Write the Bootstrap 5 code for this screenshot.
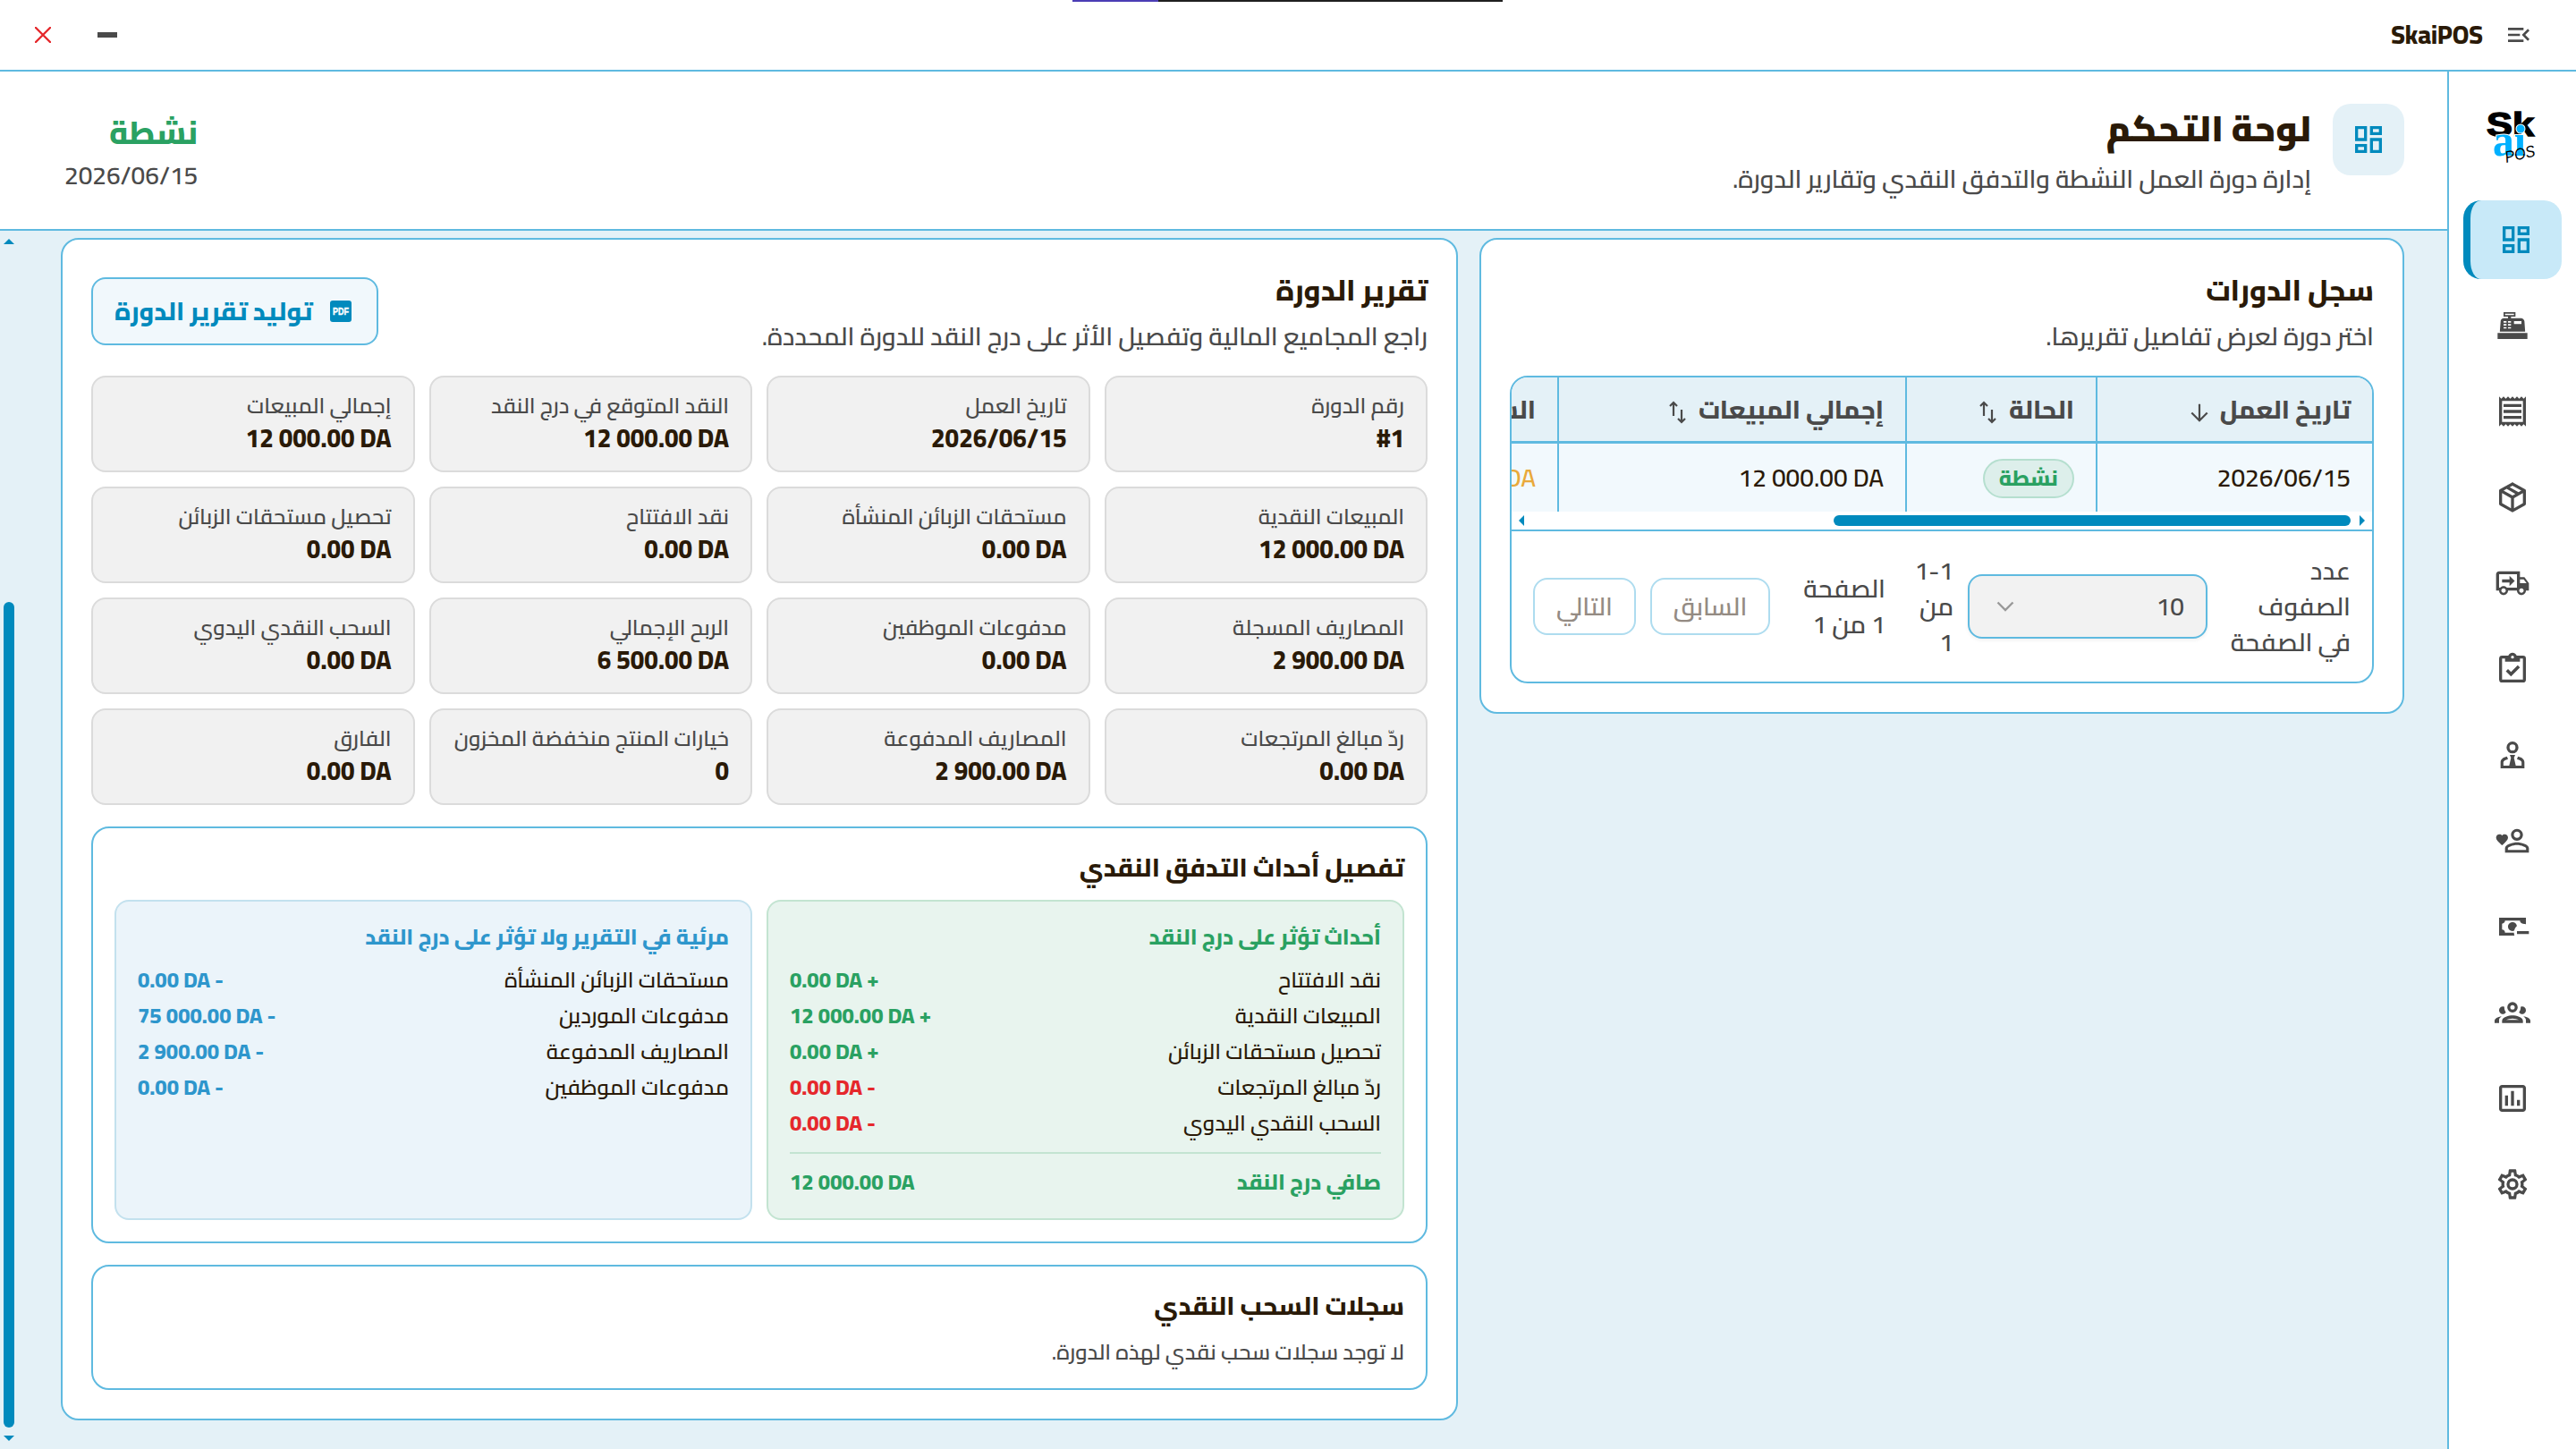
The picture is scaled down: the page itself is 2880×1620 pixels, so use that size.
<!DOCTYPE html>
<html lang="ar" dir="rtl">
<head>
  <meta charset="UTF-8" />
  <meta name="viewport" content="width=device-width, initial-scale=1" />
  <title>لوحة التحكم - SkaiPOS</title>
  <link rel="stylesheet" href="https://cdn.jsdelivr.net/npm/bootstrap@5.3.0/dist/css/bootstrap.min.css" />
  <style>
    :root {
      --line: #5fbae0;
      --brand: #008abd;
      --soft: #e4f1f7;
      --ink: #2a1a08;
      --muted: #4a4a4a;
      --good: #2aa162;
      --bad: #e5282c;
      --info: #2e96cc;
    }
    body {
      height: 1620px;
      overflow: hidden;
      font: 600 28px/40px Cairo, "Noto Sans Arabic", "Open Sans", sans-serif;
      color: var(--ink);
      background: #fff;
    }
    h1, h2, h3, h4, p { margin: 0; }
    .fw-x { font-weight: 800; }
    .muted { color: var(--muted); }
    .good { color: var(--good); }
    .bad { color: var(--bad); }
    .info { color: var(--info); }
    svg { display: block; fill: currentColor; flex: none; }

    /* window bar */
    .topbar { height: 80px; border-bottom: 2px solid var(--line); padding: 0 48px 0 39px; }
    .drag-line { position: absolute; top: 0; left: 1199px; width: 481px; height: 2px; background: linear-gradient(to right, #4b3db5 96px, #1f1f1f 96px); }
    .win-btns { gap: 52px; }

    /* sidebar */
    .sidebar { width: 144px; border-left: 2px solid var(--line); padding: 42px 16px 0; gap: 8px; }
    .brand-logo { height: 64px; margin: 0 auto 30px; direction: ltr; }
    .side-item { height: 88px; color: var(--muted); border-radius: 20px; }
    .side-item.active { background: #c8e9f8; color: var(--brand); border-left: 8px solid var(--brand); }

    /* page header */
    .page-head { height: 178px; border-bottom: 2px solid var(--line); padding: 36px 48px 36px 72px; }
    .head-icon { width: 80px; height: 80px; border-radius: 20px; background: var(--soft); color: var(--brand); }
    .page-head h1 { font-size: 40px; line-height: 56px; font-weight: 900; margin-bottom: 8px; }
    .state { font-size: 36px; line-height: 56px; }

    /* scroll area */
    .scroll-area { background: var(--soft); }
    .cols { display: grid; grid-template-columns: 1034px 1562px; gap: 24px; padding: 8px 48px 0; align-items: start; }
    .vbar { width: 20px; padding: 9px 4px; }
    .vbar .thumb { width: 12px; height: 923px; border-radius: 6px; background: var(--brand); margin: auto 0 9px; }
    .panel { background: #fff; border: 2px solid var(--line); border-radius: 20px; padding: 32px; }
    .panel-in { padding: 24px; }
    .title { font-size: 32px; line-height: 48px; font-weight: 800; margin-bottom: 8px; }
    .subtitle { font-size: 28px; line-height: 40px; font-weight: 800; margin-bottom: 16px; }

    /* sessions table */
    .tbl-box { border: 2px solid var(--line); border-radius: 20px; overflow: hidden; }
    .tbl-scroll { overflow: hidden; }
    .tbl { width: 1300px; table-layout: fixed; border-collapse: separate; border-spacing: 0; }
    .tbl th, .tbl td { padding: 0 24px; border-left: 2px solid var(--line); white-space: nowrap; vertical-align: middle; }
    .tbl th { height: 74px; background: var(--soft); color: var(--muted); font-weight: 800; border-bottom: 3px solid var(--line); }
    .tbl td { height: 76px; background: #f2f9fd; }
    .tbl th svg { display: inline-block; vertical-align: middle; fill: none; stroke: currentColor; margin-right: 6px; }
    .pill { display: inline-block; border: 2px solid #b5dfcf; background: #ddefeb; border-radius: 22px; padding: 4px 16px; font-size: 24px; line-height: 32px; font-weight: 800; color: var(--good); vertical-align: middle; }
    .hbar { height: 20px; padding: 4px 8px; color: var(--brand); }
    .hbar .thumb { width: 578px; height: 12px; border-radius: 6px; background: var(--brand); margin-right: 10px; }
    .tbl-foot { border-top: 2px solid var(--line); padding: 24px; }
    .tbl-foot .lbl { width: 160px; }
    .size-select { width: 268px; height: 72px; background: #f2f2f2; border: 2px solid var(--line); border-radius: 16px; padding: 0 30px 0 24px; padding: 0 24px 0 30px; box-shadow: 0 2px 4px rgba(0, 0, 0, .06); }
    .pg-count { width: 76px; padding-right: 16px; }
    .pg-info { width: 129px; margin-right: 16px; }
    .pg-btn { height: 64px; border: 2px solid #aedcef; border-radius: 16px; color: #948b83; background: #fff; }

    /* report */
    .pdf-btn { height: 76px; border: 2px solid var(--line); border-radius: 16px; background: #f1f8fc; color: var(--brand); padding: 0 24px; gap: 16px; font-weight: 800; }
    .stats { display: grid; grid-template-columns: repeat(4, 1fr); gap: 16px; margin: 24px 0; }
    .stat { height: 108px; border: 2px solid #dbdbdb; border-radius: 16px; background: #f1f1f1; padding: 16px 24px; }
    .stat p { font-size: 24px; line-height: 32px; color: var(--muted); white-space: nowrap; }
    .stat bdi { display: block; font-weight: 800; text-align: right; }
    .events { display: grid; grid-template-columns: 1fr 1fr; gap: 16px; }
    .event-box { border: 2px solid; border-radius: 16px; padding: 24px; font-size: 24px; line-height: 32px; }
    .event-box h4 { font-size: 24px; line-height: 32px; font-weight: 800; margin-bottom: 16px; }
    .event-box .line { display: flex; justify-content: space-between; margin-bottom: 8px; }
    .event-box .line span:last-child, .total { font-weight: 800; }
    .box-in { background: #e8f4ee; border-color: #c3e4d1; }
    .box-out { background: #ebf4fa; border-color: #c3e1ee; }
    .total { border-top: 2px solid #c3e4d1; margin-top: 16px; padding-top: 16px; }
  </style>
</head>
<body class="d-flex flex-column">

  <header class="topbar d-flex justify-content-between align-items-center flex-shrink-0">
    <div class="drag-line"></div>
    <div class="d-flex align-items-center gap-4">
      <svg class="muted" width="32" height="32" viewBox="0 0 24 24"><path d="M3 18h13v-2H3v2zM3 6v2h13V6H3zm0 7h10v-2H3v2zm18 2.59L17.42 12 21 8.41 19.59 7l-5 5 5 5L21 15.59z"/></svg>
      <span class="fw-x">SkaiPOS</span>
    </div>
    <div class="win-btns d-flex align-items-center">
      <svg class="muted" width="22" height="6" viewBox="0 0 22 6"><path d="M0 0h22v6H0z"/></svg>
      <svg class="bad" width="18" height="18" viewBox="0 0 18 18"><path d="M1 1l16 16M17 1L1 17" fill="none" stroke="currentColor" stroke-width="2.4" stroke-linecap="round"/></svg>
    </div>
  </header>

  <div class="d-flex flex-grow-1">
    <nav class="sidebar d-flex flex-column flex-shrink-0">
      <svg class="brand-logo" width="64" height="64" viewBox="0 0 64 64">
        <text x="3" y="30" font-family="Liberation Sans" font-weight="700" font-size="36" fill="#000" stroke="#000" stroke-width="1.5" textLength="53" lengthAdjust="spacingAndGlyphs">Sk</text>
        <g font-family="Liberation Serif" font-weight="700" font-size="50" fill="#00b0ff" stroke="#fff" stroke-width="2" paint-order="stroke">
          <text x="10" y="52" textLength="37" lengthAdjust="spacingAndGlyphs">aı</text>
          <circle cx="41" cy="22" r="4.5"/>
        </g>
        <text x="25" y="60" font-family="Liberation Sans" font-weight="400" font-style="italic" font-size="18" fill="#000" transform="rotate(-13 25 60)" textLength="34" lengthAdjust="spacingAndGlyphs">POS</text>
      </svg>
      <a class="side-item active d-flex align-items-center justify-content-center"><svg width="40" height="40" viewBox="0 0 24 24"><path d="M19 5v2h-4V5h4M9 5v6H5V5h4m10 8v6h-4v-6h4M9 17v2H5v-2h4M21 3h-8v6h8V3zM11 3H3v10h8V3zm10 8h-8v10h8V11zm-10 4H3v6h8v-6z"/></svg></a>
      <a class="side-item d-flex align-items-center justify-content-center"><svg width="40" height="40" viewBox="0 0 24 24"><path d="M2 17H22V21H2V17M6.25 7H9V6H6V3H14V6H11V7H17.8C18.8 7 19.8 8 20 9L20.5 16H3.5L4.05 9C4.05 8 5.05 7 6.25 7M13 9V11H18V9H13M6 9V10H8V9H6M9 9V10H11V9H9M6 11V12H8V11H6M9 11V12H11V11H9M6 13V14H8V13H6M9 13V14H11V13H9M7 4V5H13V4H7Z"/></svg></a>
      <a class="side-item d-flex align-items-center justify-content-center"><svg width="40" height="40" viewBox="0 0 24 24"><path d="M19.5 3.5L18 2l-1.5 1.5L15 2l-1.5 1.5L12 2l-1.5 1.5L9 2 7.5 3.5 6 2 4.5 3.5 3 2v20l1.5-1.5L6 22l1.5-1.5L9 22l1.5-1.5L12 22l1.5-1.5L15 22l1.5-1.5L18 22l1.5-1.5L21 22V2l-1.5 1.5zM19 19.09H5V4.91h14v14.18zM6 15h12v2H6zm0-4h12v2H6zm0-4h12v2H6z"/></svg></a>
      <a class="side-item d-flex align-items-center justify-content-center"><svg width="40" height="40" viewBox="0 0 24 24"><path d="M21,16.5C21,16.88 20.79,17.21 20.47,17.38L12.57,21.82C12.41,21.94 12.21,22 12,22C11.79,22 11.59,21.94 11.43,21.82L3.53,17.38C3.21,17.21 3,16.88 3,16.5V7.5C3,7.12 3.21,6.79 3.53,6.62L11.43,2.18C11.59,2.06 11.79,2 12,2C12.21,2 12.41,2.06 12.57,2.18L20.47,6.62C20.79,6.79 21,7.12 21,7.5V16.5M12,4.15L10.11,5.22L16,8.61L17.96,7.5L12,4.15M6.04,7.5L12,10.85L13.96,9.75L8.08,6.35L6.04,7.5M5,15.91L11,19.29V12.58L5,9.21V15.91M19,15.91V9.21L13,12.58V19.29L19,15.91Z"/></svg></a>
      <a class="side-item d-flex align-items-center justify-content-center"><svg width="40" height="40" viewBox="0 0 24 24"><path d="M18 18.5c.83 0 1.5-.67 1.5-1.5s-.67-1.5-1.5-1.5-1.5.67-1.5 1.5.67 1.5 1.5 1.5m1.5-9H17V12h4.46L19.5 9.5M6 18.5c.83 0 1.5-.67 1.5-1.5s-.67-1.5-1.5-1.5-1.5.67-1.5 1.5.67 1.5 1.5 1.5M20 8l3 4v5h-2c0 1.66-1.34 3-3 3s-3-1.34-3-3H9c0 1.66-1.34 3-3 3s-3-1.34-3-3H1V6c0-1.11.89-2 2-2h14v4h3M3 6v9h.76c.55-.61 1.35-1 2.24-1 .89 0 1.69.39 2.24 1H15V6H3z"/><path d="M5 9.5h5V7l3.5 3.5L10 14v-2.5H5z"/></svg></a>
      <a class="side-item d-flex align-items-center justify-content-center"><svg width="40" height="40" viewBox="0 0 24 24"><path d="M19,3H14.82C14.4,1.84 13.3,1 12,1C10.7,1 9.6,1.84 9.18,3H5A2,2 0 0,0 3,5V19A2,2 0 0,0 5,21H19A2,2 0 0,0 21,19V5A2,2 0 0,0 19,3M12,3A1,1 0 0,1 13,4A1,1 0 0,1 12,5A1,1 0 0,1 11,4A1,1 0 0,1 12,3M7,7H17V5H19V19H5V5H7V7M7.5,13.5L9,12L11,14L15.5,9.5L17,11L11,17L7.5,13.5Z"/></svg></a>
      <a class="side-item d-flex align-items-center justify-content-center"><svg width="40" height="40" viewBox="0 0 24 24"><path d="M12 3a4 4 0 1 0 0 8 4 4 0 0 0 0-8m0 2a2 2 0 1 1 0 4 2 2 0 0 1 0-4M10.2 12h3.6l-.8 2 1.2 5.2h3.9V17c0-1-1.3-1.7-3.1-2.2l.7-1.7C18.3 13.7 20 15 20 17v4H4v-4c0-2 1.7-3.3 4.3-3.9l.7 1.7C7.2 15.3 5.9 16 5.9 17v2.2h3.9L11 14z"/></svg></a>
      <a class="side-item d-flex align-items-center justify-content-center"><svg width="40" height="40" viewBox="0 0 24 24"><path d="M5 15L4.4 14.5C2.4 12.6 1 11.4 1 9.9C1 8.7 2 7.7 3.2 7.7C3.9 7.7 4.6 8 5 8.5C5.4 8 6.1 7.7 6.8 7.7C8 7.7 9 8.6 9 9.9C9 11.4 7.6 12.6 5.6 14.5L5 15M15 4C12.8 4 11 5.8 11 8S12.8 12 15 12 19 10.2 19 8 17.2 4 15 4M15 10.1C13.8 10.1 12.9 9.2 12.9 8S13.8 5.9 15 5.9 17.1 6.8 17.1 8 16.2 10.1 15 10.1M15 13C12.3 13 7 14.3 7 17V20H23V17C23 14.3 17.7 13 15 13M8.9 18.1V17C8.9 16.4 12 14.9 15 14.9 18 14.9 21.1 16.4 21.1 17V18.1H8.9Z"/></svg></a>
      <a class="side-item d-flex align-items-center justify-content-center"><svg width="40" height="40" viewBox="0 0 24 24"><path d="M15 15V17H23V15M14.97 11.61C14.85 10.28 13.59 8.97 12 9C10.3 9.03 9 10.3 9 12C9 13.7 10.3 14.94 12 15C12.38 15 12.77 14.92 13.14 14.77C13.41 13.67 13.86 12.63 14.97 11.61M13 16H7C7 14.9 6.11 14 5 14V10C6.11 10 7 9.11 7 8H17C17 9.11 17.9 10 19 10V10.06C19.67 10.06 20.34 10.18 21 10.4V6H3V18H13.32C13.1 17.33 13 16.66 13 16Z"/></svg></a>
      <a class="side-item d-flex align-items-center justify-content-center"><svg width="40" height="40" viewBox="0 0 24 24"><path d="M12,5A3.5,3.5 0 0,0 8.5,8.5A3.5,3.5 0 0,0 12,12A3.5,3.5 0 0,0 15.5,8.5A3.5,3.5 0 0,0 12,5M12,7A1.5,1.5 0 0,1 13.5,8.5A1.5,1.5 0 0,1 12,10A1.5,1.5 0 0,1 10.5,8.5A1.5,1.5 0 0,1 12,7M5.5,8A2.5,2.5 0 0,0 3,10.5C3,11.44 3.53,12.25 4.29,12.68C4.65,12.88 5.06,13 5.5,13C5.94,13 6.35,12.88 6.71,12.68C7.08,12.47 7.39,12.17 7.62,11.81C6.89,10.86 6.5,9.7 6.5,8.5C6.5,8.41 6.5,8.31 6.5,8.22C6.2,8.08 5.86,8 5.5,8M18.5,8C18.14,8 17.8,8.08 17.5,8.22C17.5,8.31 17.5,8.41 17.5,8.5C17.5,9.7 17.11,10.86 16.38,11.81C16.5,12 16.63,12.15 16.78,12.3C16.94,12.45 17.1,12.58 17.29,12.68C17.65,12.88 18.06,13 18.5,13C18.94,13 19.35,12.88 19.71,12.68C20.47,12.25 21,11.44 21,10.5A2.5,2.5 0 0,0 18.5,8M12,14C9.66,14 5,15.17 5,17.5V19H19V17.5C19,15.17 14.34,14 12,14M4.71,14.55C2.78,14.78 0,15.76 0,17.5V19H3V17.07C3,16.06 3.69,15.22 4.71,14.55M19.29,14.55C20.31,15.22 21,16.06 21,17.07V19H24V17.5C24,15.76 21.22,14.78 19.29,14.55M12,16C13.53,16 15.24,16.5 16.23,17H7.77C8.76,16.5 10.47,16 12,16Z"/></svg></a>
      <a class="side-item d-flex align-items-center justify-content-center"><svg width="40" height="40" viewBox="0 0 24 24"><path d="M9 17H7V10H9V17M13 17H11V7H13V17M17 17H15V13H17V17M19 19H5V5H19V19M19 3H5C3.9 3 3 3.9 3 5V19C3 20.1 3.9 21 5 21H19C20.1 21 21 20.1 21 19V5C21 3.9 20.1 3 19 3Z" fill-rule="evenodd"/></svg></a>
      <a class="side-item d-flex align-items-center justify-content-center"><svg width="40" height="40" viewBox="0 0 24 24"><path d="M12,8A4,4 0 0,1 16,12A4,4 0 0,1 12,16A4,4 0 0,1 8,12A4,4 0 0,1 12,8M12,10A2,2 0 0,0 10,12A2,2 0 0,0 12,14A2,2 0 0,0 14,12A2,2 0 0,0 12,10M10,22C9.75,22 9.54,21.82 9.5,21.58L9.13,18.93C8.5,18.68 7.96,18.34 7.44,17.94L4.95,18.95C4.73,19.03 4.46,18.95 4.34,18.73L2.34,15.27C2.21,15.05 2.27,14.78 2.46,14.63L4.57,12.97L4.5,12L4.57,11L2.46,9.37C2.27,9.22 2.21,8.95 2.34,8.73L4.34,5.27C4.46,5.05 4.73,4.96 4.95,5.05L7.44,6.05C7.96,5.66 8.5,5.32 9.13,5.07L9.5,2.42C9.54,2.18 9.75,2 10,2H14C14.25,2 14.46,2.18 14.5,2.42L14.87,5.07C15.5,5.32 16.04,5.66 16.56,6.05L19.05,5.05C19.27,4.96 19.54,5.05 19.66,5.27L21.66,8.73C21.79,8.95 21.73,9.22 21.54,9.37L19.43,11L19.5,12L19.43,13L21.54,14.63C21.73,14.78 21.79,15.05 21.66,15.27L19.66,18.73C19.54,18.95 19.27,19.04 19.05,18.95L16.56,17.95C16.04,18.34 15.5,18.68 14.87,18.93L14.5,21.58C14.46,21.82 14.25,22 14,22H10M11.25,4L10.88,6.61C9.68,6.86 8.62,7.5 7.85,8.39L5.44,7.35L4.69,8.65L6.8,10.2C6.4,11.37 6.4,12.64 6.8,13.8L4.68,15.36L5.43,16.66L7.86,15.62C8.63,16.5 9.68,17.14 10.87,17.38L11.24,20H12.76L13.13,17.39C14.32,17.14 15.37,16.5 16.14,15.62L18.57,16.66L19.32,15.36L17.2,13.81C17.6,12.64 17.6,11.37 17.2,10.2L19.31,8.65L18.56,7.35L16.15,8.39C15.38,7.5 14.32,6.86 13.12,6.62L12.75,4H11.25Z"/></svg></a>
    </nav>

    <main class="d-flex flex-column flex-grow-1">
      <div class="page-head d-flex justify-content-between align-items-center">
        <div class="d-flex gap-4">
          <div class="head-icon d-flex align-items-center justify-content-center">
            <svg width="40" height="40" viewBox="0 0 24 24"><path d="M19 5v2h-4V5h4M9 5v6H5V5h4m10 8v6h-4v-6h4M9 17v2H5v-2h4M21 3h-8v6h8V3zM11 3H3v10h8V3zm10 8h-8v10h8V11zm-10 4H3v6h8v-6z"/></svg>
          </div>
          <div>
            <h1>لوحة التحكم</h1>
            <p class="muted">إدارة دورة العمل النشطة والتدفق النقدي وتقارير الدورة.</p>
          </div>
        </div>
        <div>
          <div class="state good fw-x">نشطة</div>
          <div class="muted">2026/06/15</div>
        </div>
      </div>

      <div class="scroll-area d-flex flex-grow-1">
        <div class="cols">

          <!-- sessions list -->
          <section class="panel">
            <h2 class="title">سجل الدورات</h2>
            <p class="muted mb-4">اختر دورة لعرض تفاصيل تقريرها.</p>
            <div class="tbl-box">
              <div class="tbl-scroll">
                <table class="tbl">
                  <colgroup><col style="width: 309px"><col style="width: 213px"><col style="width: 389px"><col></colgroup>
                  <thead>
                    <tr>
                      <th>تاريخ العمل <svg width="22" height="22" viewBox="0 0 24 24" stroke-width="2.4"><path d="M12 2v20M2.500 12.500L12 22l9.500-9.500"/></svg></th>
                      <th>الحالة <svg width="24" height="26" viewBox="0 0 24 26" stroke-width="2.2"><path d="M8 17V2M4 6l4-4 4 4M17 10v14M13 20l4 4 4-4"/></svg></th>
                      <th>إجمالي المبيعات <svg width="24" height="26" viewBox="0 0 24 26" stroke-width="2.2"><path d="M8 17V2M4 6l4-4 4 4M17 10v14M13 20l4 4 4-4"/></svg></th>
                      <th>السحوبات</th>
                    </tr>
                  </thead>
                  <tbody>
                    <tr>
                      <td>2026/06/15</td>
                      <td><span class="pill">نشطة</span></td>
                      <td><bdi dir="ltr">12 000.00 DA</bdi></td>
                      <td style="color: #e9a93a"><bdi dir="ltr">0.00 DA</bdi></td>
                    </tr>
                  </tbody>
                </table>
              </div>
              <div class="hbar d-flex align-items-center">
                <svg width="6" height="12" viewBox="0 0 6 12"><path d="M0 0l6 6-6 6z"/></svg>
                <div class="thumb"></div>
                <svg class="me-auto" width="6" height="12" viewBox="0 0 6 12"><path d="M6 0L0 6l6 6z"/></svg>
              </div>
              <div class="tbl-foot muted d-flex align-items-center">
                <div class="lbl">عدد<br>الصفوف<br>في الصفحة</div>
                <div class="size-select d-flex align-items-center justify-content-between">
                  <span>10</span>
                  <svg width="20" height="12" viewBox="0 0 20 12"><path d="M1.500 1.500L10 10l8.500-8.500" fill="none" stroke="#999" stroke-width="2.400"/></svg>
                </div>
                <div class="pg-count">1-1<br>من<br>1</div>
                <div class="pg-info">الصفحة<br>1 من 1</div>
                <div class="pg-btn d-flex align-items-center justify-content-center" style="width: 134px">السابق</div>
                <div class="pg-btn d-flex align-items-center justify-content-center me-3" style="width: 115px">التالي</div>
              </div>
            </div>
          </section>

          <!-- session report -->
          <section class="panel">
            <div class="d-flex justify-content-between align-items-center">
              <div>
                <h2 class="title">تقرير الدورة</h2>
                <p class="muted">راجع المجاميع المالية وتفصيل الأثر على درج النقد للدورة المحددة.</p>
              </div>
              <div class="pdf-btn d-flex align-items-center">
                <svg width="32" height="32" viewBox="0 0 32 32" style="direction: ltr"><rect x="4" y="4" width="24" height="24" rx="3"/><text x="7" y="19.5" font-family="Liberation Sans" font-weight="700" font-size="10.5" fill="#fff" stroke="#fff" stroke-width=".4" textLength="18" lengthAdjust="spacingAndGlyphs">PDF</text></svg>
                <span>توليد تقرير الدورة</span>
              </div>
            </div>

            <div class="stats">
              <div class="stat"><p>رقم الدورة</p><bdi dir="ltr">#1</bdi></div>
              <div class="stat"><p>تاريخ العمل</p><bdi dir="ltr">2026/06/15</bdi></div>
              <div class="stat"><p>النقد المتوقع في درج النقد</p><bdi dir="ltr">12 000.00 DA</bdi></div>
              <div class="stat"><p>إجمالي المبيعات</p><bdi dir="ltr">12 000.00 DA</bdi></div>
              <div class="stat"><p>المبيعات النقدية</p><bdi dir="ltr">12 000.00 DA</bdi></div>
              <div class="stat"><p>مستحقات الزبائن المنشأة</p><bdi dir="ltr">0.00 DA</bdi></div>
              <div class="stat"><p>نقد الافتتاح</p><bdi dir="ltr">0.00 DA</bdi></div>
              <div class="stat"><p>تحصيل مستحقات الزبائن</p><bdi dir="ltr">0.00 DA</bdi></div>
              <div class="stat"><p>المصاريف المسجلة</p><bdi dir="ltr">2 900.00 DA</bdi></div>
              <div class="stat"><p>مدفوعات الموظفين</p><bdi dir="ltr">0.00 DA</bdi></div>
              <div class="stat"><p>الربح الإجمالي</p><bdi dir="ltr">6 500.00 DA</bdi></div>
              <div class="stat"><p>السحب النقدي اليدوي</p><bdi dir="ltr">0.00 DA</bdi></div>
              <div class="stat"><p>ردّ مبالغ المرتجعات</p><bdi dir="ltr">0.00 DA</bdi></div>
              <div class="stat"><p>المصاريف المدفوعة</p><bdi dir="ltr">2 900.00 DA</bdi></div>
              <div class="stat"><p>خيارات المنتج منخفضة المخزون</p><bdi dir="ltr">0</bdi></div>
              <div class="stat"><p>الفارق</p><bdi dir="ltr">0.00 DA</bdi></div>
            </div>

            <div class="panel panel-in mb-4">
              <h3 class="subtitle">تفصيل أحداث التدفق النقدي</h3>
              <div class="events">
                <div class="event-box box-in">
                  <h4 class="good">أحداث تؤثر على درج النقد</h4>
                  <div class="line"><span>نقد الافتتاح</span><span class="good">+ <bdi dir="ltr">0.00 DA</bdi></span></div>
                  <div class="line"><span>المبيعات النقدية</span><span class="good">+ <bdi dir="ltr">12 000.00 DA</bdi></span></div>
                  <div class="line"><span>تحصيل مستحقات الزبائن</span><span class="good">+ <bdi dir="ltr">0.00 DA</bdi></span></div>
                  <div class="line"><span>ردّ مبالغ المرتجعات</span><span class="bad">- <bdi dir="ltr">0.00 DA</bdi></span></div>
                  <div class="line"><span>السحب النقدي اليدوي</span><span class="bad">- <bdi dir="ltr">0.00 DA</bdi></span></div>
                  <div class="total good d-flex justify-content-between"><span>صافي درج النقد</span><bdi dir="ltr">12 000.00 DA</bdi></div>
                </div>
                <div class="event-box box-out">
                  <h4 class="info">مرئية في التقرير ولا تؤثر على درج النقد</h4>
                  <div class="line"><span>مستحقات الزبائن المنشأة</span><span class="info">- <bdi dir="ltr">0.00 DA</bdi></span></div>
                  <div class="line"><span>مدفوعات الموردين</span><span class="info">- <bdi dir="ltr">75 000.00 DA</bdi></span></div>
                  <div class="line"><span>المصاريف المدفوعة</span><span class="info">- <bdi dir="ltr">2 900.00 DA</bdi></span></div>
                  <div class="line"><span>مدفوعات الموظفين</span><span class="info">- <bdi dir="ltr">0.00 DA</bdi></span></div>
                </div>
              </div>
            </div>

            <div class="panel panel-in">
              <h3 class="subtitle">سجلات السحب النقدي</h3>
              <p class="muted" style="font-size: 24px; line-height: 32px">لا توجد سجلات سحب نقدي لهذه الدورة.</p>
            </div>
          </section>
        </div>

        <div class="vbar d-flex flex-column" style="color: var(--brand)">
          <svg width="12" height="6" viewBox="0 0 12 6"><path d="M0 6l6-6 6 6z"/></svg>
          <div class="thumb"></div>
          <svg width="12" height="6" viewBox="0 0 12 6"><path d="M0 0l6 6 6-6z"/></svg>
        </div>
      </div>
    </main>
  </div>

  <script src="https://cdn.jsdelivr.net/npm/bootstrap@5.3.0/dist/js/bootstrap.bundle.min.js"></script>
</body>
</html>
